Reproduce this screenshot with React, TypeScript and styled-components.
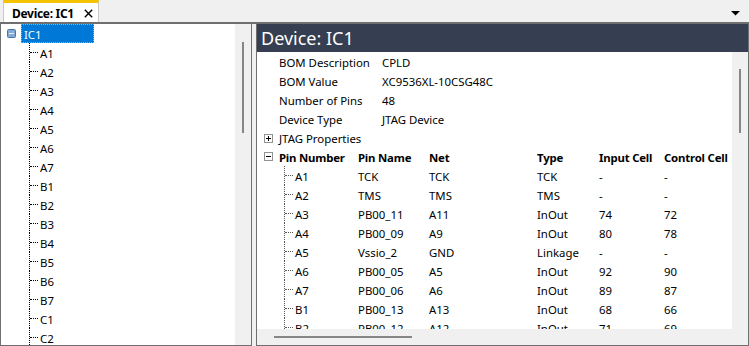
import React from 'react';
import styled, { createGlobalStyle } from 'styled-components';

const GlobalStyle = createGlobalStyle`
  html, body { margin: 0; padding: 0; background: #f0f0f0; }
  body {
    font-family: "Noto Sans", "Liberation Sans", sans-serif;
    font-size: 11.4px;
    color: #000;
  }
  * { box-sizing: border-box; }
`;

const Window = styled.div`
  width: 749px;
  height: 346px;
  display: flex;
  flex-direction: column;
  background: #f0f0f0;
  overflow: hidden;
`;

const TabStrip = styled.div`
  height: 24px;
  flex: none;
  display: flex;
  align-items: stretch;
  padding-left: 3px;
  border-bottom: 2px solid #6f6f6f;
`;

const Tab = styled.div`
  width: 96px;
  display: flex;
  align-items: center;
  padding: 1px 0 0 8px;
  background: #fff;
  border-top: 3px solid #f5c400;
  border-left: 1px solid #c9c9c9;
  border-right: 1px solid #c9c9c9;
  font-weight: bold;
  font-size: 12px;
  letter-spacing: -0.3px;
  white-space: nowrap;
`;

const TabClose = styled.span`
  display: flex;
  margin-left: auto;
  margin-right: 5px;
`;

const TabMenu = styled.div`
  margin-left: auto;
  width: 18px;
  display: flex;
  align-items: flex-start;
  padding-top: 11px;
`;

const Body = styled.div`
  flex: 1;
  display: flex;
  gap: 4px;
  min-height: 0;
`;

const Panel = styled.div<{ $w: number }>`
  width: ${p => p.$w}px;
  flex: none;
  display: flex;
  flex-direction: column;
  border: 1px solid #6f6f6f;
  border-top: none;
  overflow: hidden;
`;

const PanelMain = styled.div`
  flex: 1;
  display: flex;
  min-height: 0;
`;

const WhiteArea = styled.div`
  flex: 1;
  background: #fff;
  overflow: hidden;
  display: flex;
  flex-direction: column;
`;

const VScroll = styled.div<{ $top: number }>`
  width: 16px;
  flex: none;
  background: #f0f0f0;
  padding: ${p => p.$top}px 0 0 7px;
`;

const VThumb = styled.div<{ $h: number }>`
  width: 2px;
  height: ${p => p.$h}px;
  background: #868686;
`;

const HScrollRow = styled.div`
  height: 16px;
  flex: none;
  display: flex;
`;

const HScroll = styled.div`
  flex: 1;
  background: #f0f0f0;
  padding: 7px 0 0 17px;
`;

const HThumb = styled.div<{ $w: number }>`
  width: ${p => p.$w}px;
  height: 2px;
  background: #868686;
`;

const Corner = styled.div`
  width: 16px;
  background: #f0f0f0;
`;

/* ---------- left tree ---------- */

const TreeRow = styled.div<{ $indent: number }>`
  height: 19px;
  flex: none;
  display: flex;
  align-items: stretch;
  padding-left: ${p => p.$indent}px;
  white-space: nowrap;
`;

const IconSlot = styled.span<{ $gap: number }>`
  display: flex;
  align-items: center;
  margin-right: ${p => p.$gap}px;
`;

const RootLabel = styled.span`
  width: 73px;
  display: flex;
  align-items: center;
  padding: 1px 0 0 2px;
  background: #0078d7;
  color: #fff;
  border: 1px dotted #f0a040;
`;

const Connector = styled.span<{ $color: string }>`
  width: 10px;
  flex: none;
  display: flex;
  align-items: center;
  border-left: 1px dotted ${p => p.$color};
`;

const HLine = styled.span<{ $color: string }>`
  width: 8px;
  height: 0;
  border-top: 1px dotted ${p => p.$color};
`;

const NodeText = styled.span`
  display: flex;
  align-items: center;
  padding: 1px 0 0 1px;
`;

/* ---------- right panel ---------- */

const TitleBar = styled.div`
  height: 28px;
  flex: none;
  display: flex;
  align-items: center;
  padding-left: 4px;
  background: #363e52;
  color: #fff;
  font-size: 18px;
`;

const PropRow = styled.div`
  height: 19px;
  flex: none;
  display: grid;
  grid-template-columns: 103px 1fr;
  align-items: center;
  padding: 1px 0 0 22px;
  white-space: nowrap;
`;

const GroupRow = styled.div`
  height: 19px;
  flex: none;
  display: flex;
  align-items: center;
  padding: 1px 0 0 7px;
  white-space: nowrap;
`;

const TableRow = styled.div<{ $head?: boolean }>`
  height: 19px;
  flex: none;
  display: grid;
  grid-template-columns: 22px 79px 71px 108px 62px 65px 1fr;
  align-items: stretch;
  white-space: nowrap;
  font-weight: ${p => (p.$head ? 'bold' : 'normal')};
  letter-spacing: ${p => (p.$head ? '-0.2px' : '0')};
`;

const Cell = styled.span`
  display: flex;
  align-items: center;
  padding-top: 1px;
`;

const ExpCell = styled.span`
  display: flex;
  align-items: center;
  padding-left: 7px;
`;

const PinCell = styled.span`
  display: flex;
  align-items: stretch;
  padding-left: 5px;
`;

/* ---------- icons ---------- */

const ThemedMinus = () => (
  <svg width="9" height="9" viewBox="0 0 9 9">
    <rect x="0.5" y="0.5" width="8" height="8" rx="1" fill="#85aad3" stroke="#4a76a6" />
    <rect x="2" y="4" width="5" height="1" fill="#e8f1fb" />
  </svg>
);

const PlainBox = ({ open }: { open: boolean }) => (
  <svg width="9" height="9" viewBox="0 0 9 9">
    <rect x="0.5" y="0.5" width="8" height="8" fill="#fff" stroke="#939393" />
    <path d="M2 4.5h5" stroke="#000" strokeWidth="1" />
    {!open && <path d="M4.5 2v5" stroke="#000" strokeWidth="1" />}
  </svg>
);

const CloseIcon = () => (
  <svg width="9" height="9" viewBox="0 0 9 9">
    <path d="M0.8 0.8L8.2 8.2M8.2 0.8L0.8 8.2" stroke="#000" strokeWidth="1.4" />
  </svg>
);

const DropArrow = () => (
  <svg width="9" height="5" viewBox="0 0 9 5">
    <polygon points="0,0 9,0 4.5,4.5" fill="#000" />
  </svg>
);

/* ---------- data ---------- */

const treeItems = ['A1', 'A2', 'A3', 'A4', 'A5', 'A6', 'A7', 'B1', 'B2', 'B3', 'B4', 'B5', 'B6', 'B7', 'C1', 'C2'];

const props: [string, string][] = [
  ['BOM Description', 'CPLD'],
  ['BOM Value', 'XC9536XL-10CSG48C'],
  ['Number of Pins', '48'],
  ['Device Type', 'JTAG Device'],
];

const pins: string[][] = [
  ['A1', 'TCK', 'TCK', 'TCK', '-', '-'],
  ['A2', 'TMS', 'TMS', 'TMS', '-', '-'],
  ['A3', 'PB00_11', 'A11', 'InOut', '74', '72'],
  ['A4', 'PB00_09', 'A9', 'InOut', '80', '78'],
  ['A5', 'Vssio_2', 'GND', 'Linkage', '-', '-'],
  ['A6', 'PB00_05', 'A5', 'InOut', '92', '90'],
  ['A7', 'PB00_06', 'A6', 'InOut', '89', '87'],
  ['B1', 'PB00_13', 'A13', 'InOut', '68', '66'],
  ['B2', 'PB00_12', 'A12', 'InOut', '71', '69'],
];

export default function App() {
  return (
    <>
      <GlobalStyle />
      <Window>
        <TabStrip>
          <Tab>
            Device: IC1
            <TabClose>
              <CloseIcon />
            </TabClose>
          </Tab>
          <TabMenu>
            <DropArrow />
          </TabMenu>
        </TabStrip>
        <Body>
          <Panel $w={252}>
            <PanelMain>
              <WhiteArea>
                <TreeRow $indent={6}>
                  <IconSlot $gap={5}>
                    <ThemedMinus />
                  </IconSlot>
                  <RootLabel>IC1</RootLabel>
                </TreeRow>
                {treeItems.map(t => (
                  <TreeRow key={t} $indent={28}>
                    <Connector $color="#000">
                      <HLine $color="#000" />
                    </Connector>
                    <NodeText>{t}</NodeText>
                  </TreeRow>
                ))}
              </WhiteArea>
              <VScroll $top={18}>
                <VThumb $h={91} />
              </VScroll>
            </PanelMain>
          </Panel>
          <Panel $w={493}>
            <TitleBar>Device: IC1</TitleBar>
            <PanelMain>
              <WhiteArea>
                {props.map(([k, v]) => (
                  <PropRow key={k}>
                    <span>{k}</span>
                    <span>{v}</span>
                  </PropRow>
                ))}
                <GroupRow>
                  <IconSlot $gap={6}>
                    <PlainBox open={false} />
                  </IconSlot>
                  JTAG Properties
                </GroupRow>
                <TableRow $head>
                  <ExpCell>
                    <PlainBox open />
                  </ExpCell>
                  <Cell>Pin Number</Cell>
                  <Cell>Pin Name</Cell>
                  <Cell>Net</Cell>
                  <Cell>Type</Cell>
                  <Cell>Input Cell</Cell>
                  <Cell>Control Cell</Cell>
                </TableRow>
                {pins.map(r => (
                  <TableRow key={r[0]}>
                    <span />
                    <PinCell>
                      <Connector $color="#555">
                        <HLine $color="#555" />
                      </Connector>
                      <NodeText>{r[0]}</NodeText>
                    </PinCell>
                    {r.slice(1).map((c, i) => (
                      <Cell key={i}>{c}</Cell>
                    ))}
                  </TableRow>
                ))}
              </WhiteArea>
              <VScroll $top={17}>
                <VThumb $h={64} />
              </VScroll>
            </PanelMain>
            <HScrollRow>
              <HScroll>
                <HThumb $w={138} />
              </HScroll>
              <Corner />
            </HScrollRow>
          </Panel>
        </Body>
      </Window>
    </>
  );
}
